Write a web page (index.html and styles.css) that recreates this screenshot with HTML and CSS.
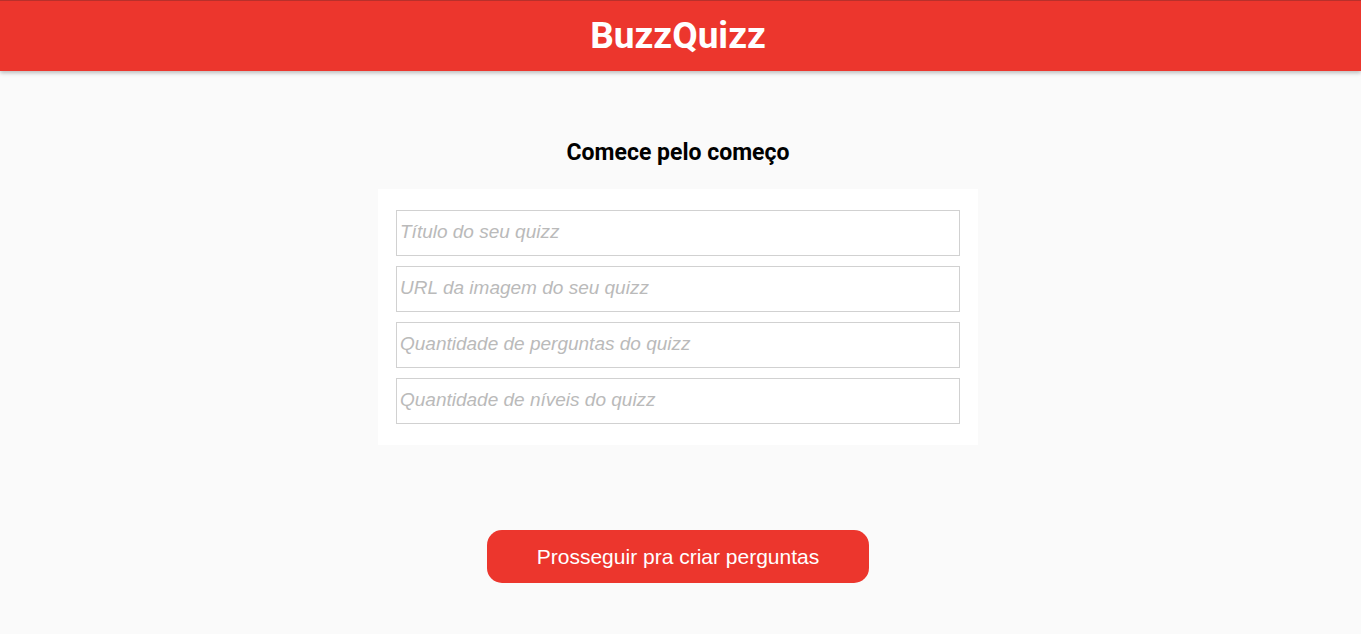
FILE: index.html
```html
<!DOCTYPE html>
<html lang="pt-BR">
<head>
<meta charset="utf-8">
<title>BuzzQuizz</title>
<link rel="stylesheet" href="styles.css">
</head>
<body>
<header class="topbar">
  <h1 class="logo">BuzzQuizz</h1>
</header>
<main class="page">
  <h2 class="section-title">Comece pelo começo</h2>
  <form class="form-box">
    <input class="field" type="text" placeholder="Título do seu quizz">
    <input class="field" type="text" placeholder="URL da imagem do seu quizz">
    <input class="field" type="text" placeholder="Quantidade de perguntas do quizz">
    <input class="field" type="text" placeholder="Quantidade de níveis do quizz">
  </form>
  <button class="next-btn" type="button">Prosseguir pra criar perguntas</button>
</main>
</body>
</html>
```
FILE: styles.css
```css
* { box-sizing: border-box; }
html, body { margin: 0; padding: 0; }
html { overflow: scroll; }
::-webkit-scrollbar { width: 15px; height: 15px; background: #f1f1f1; }
::-webkit-scrollbar-thumb { background: #c1c1c1; border: 2px solid #f1f1f1; }
::-webkit-scrollbar-track { background: #f1f1f1; }
::-webkit-scrollbar-corner { background: #dcdcdc; }
::-webkit-scrollbar-button { display: block; width: 15px; height: 15px; background: #f1f1f1; }
body {
  background: #fafafa;
  font-family: Roboto, "Liberation Sans", Arial, sans-serif;
}
.topbar {
  width: 100vw;
  height: 71px;
  padding-right: 5px;
  background: #ec362d;
  border-top: 1px solid #b8302b;
  box-shadow: 0 2px 4px rgba(0, 0, 0, 0.25);
  display: flex;
  align-items: center;
  justify-content: center;
}
.logo {
  margin: 0;
  color: #fff;
  font-family: Roboto, sans-serif;
  font-weight: 700;
  font-size: 37px;
  line-height: 40px;
}
.page {
  width: calc(100vw - 5px);
  display: flex;
  flex-direction: column;
  align-items: center;
  padding: 68px 0 104px;
}
.section-title {
  margin: 0 0 22px;
  font-family: Roboto, sans-serif;
  font-weight: 700;
  font-size: 23px;
  line-height: 28px;
  color: #000;
}
.form-box {
  width: 600px;
  background: #fff;
  padding: 21px 18px;
  display: flex;
  flex-direction: column;
  gap: 10px;
}
.field {
  width: 100%;
  height: 46px;
  margin: 0;
  border: 1px solid #d1d1d1;
  border-radius: 0;
  padding: 0 3px 2px;
  background: #fff;
  font-family: "Liberation Sans", Arial, sans-serif;
  font-size: 19px;
  font-style: italic;
  color: #000;
  outline: none;
}
.field::placeholder {
  color: #bababa;
  font-style: italic;
}
.next-btn {
  margin-top: 85px;
  width: 382px;
  height: 53px;
  border: none;
  border-radius: 15px;
  background: #ec362d;
  color: #fff;
  font-family: "Liberation Sans", Arial, sans-serif;
  font-size: 21px;
  cursor: pointer;
}
```
